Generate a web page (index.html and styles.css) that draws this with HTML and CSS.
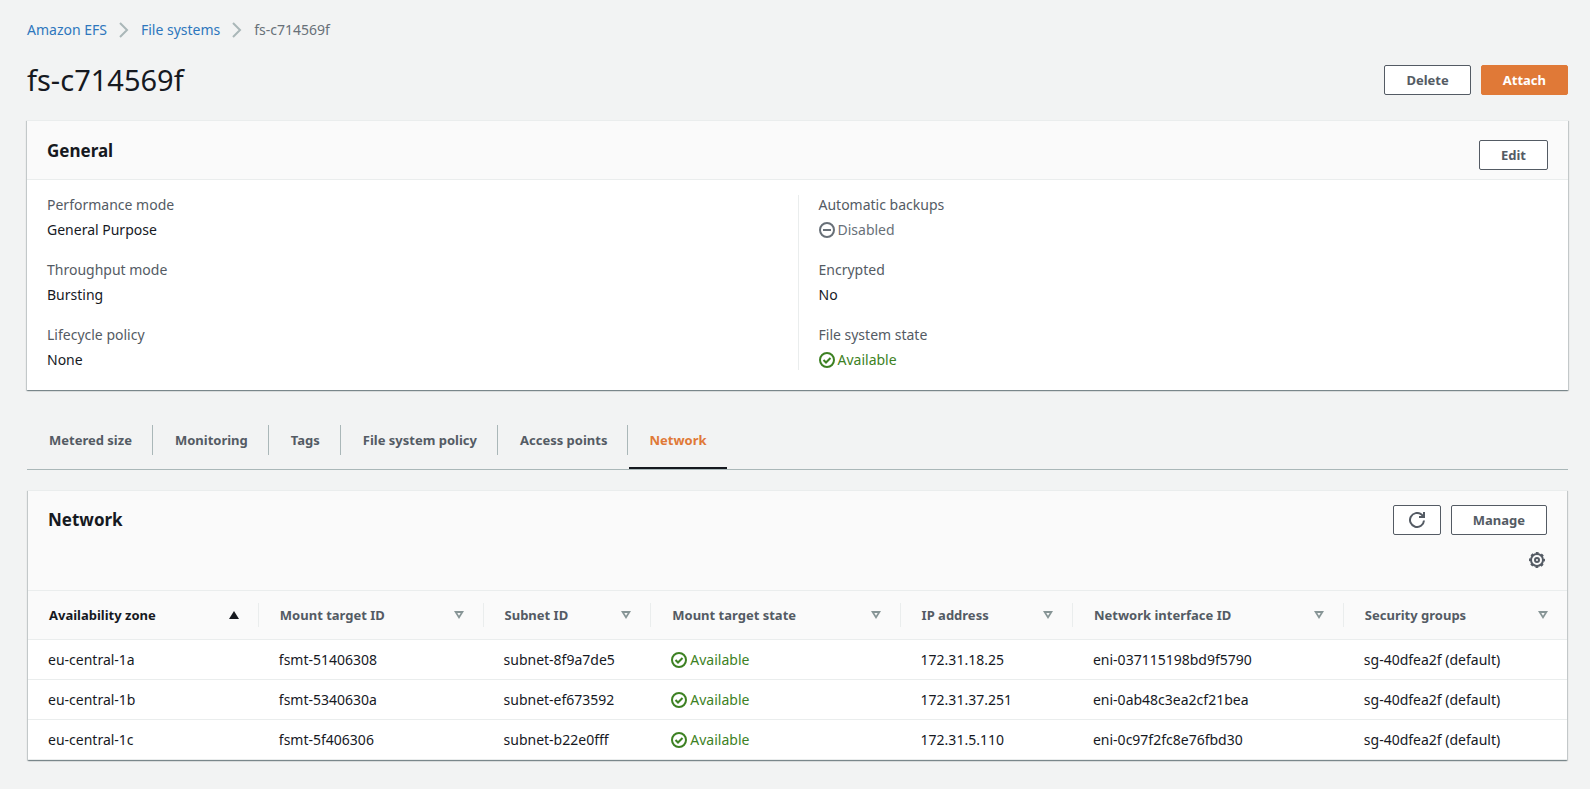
FILE: index.html
```html
<!DOCTYPE html>
<html lang="en">
<head>
    <meta charset="UTF-8">
    <meta name="viewport" content="width=device-width, initial-scale=1.0">
    <title>Amazon EFS - fs-c714569f</title>
    <link rel="stylesheet" href="styles.css">
</head>
<body>
<!-- Shared icons -->
<svg class="sprite" aria-hidden="true">
    <symbol id="icon-chevron" viewBox="0 0 10 16"><path d="M1 1l7 7-7 7"/></symbol>
    <symbol id="icon-check" viewBox="0 0 16 16"><circle cx="8" cy="8" r="7"/><path d="M4.5 8l2.5 2.5 4.5-4.5"/></symbol>
    <symbol id="icon-minus" viewBox="0 0 16 16"><circle cx="8" cy="8" r="7"/><path d="M4 8h8"/></symbol>
    <symbol id="icon-sort" viewBox="0 0 10 8"><path fill="currentColor" fill-rule="evenodd" stroke="none" d="M0 0h10L5 8zM3.300 2L5 4.800 6.700 2z"/></symbol>
    <symbol id="icon-sort-up" viewBox="0 0 10 8"><path fill="currentColor" stroke="none" d="M5 0l5 8H0z"/></symbol>
</svg>

<main class="page">
    <nav class="breadcrumb" aria-label="Breadcrumb">
        <a href="#">Amazon EFS</a>
        <svg class="chevron"><use href="#icon-chevron"/></svg>
        <a href="#">File systems</a>
        <svg class="chevron"><use href="#icon-chevron"/></svg>
        <span>fs-c714569f</span>
    </nav>

    <div class="title-bar">
        <h1>fs-c714569f</h1>
        <div class="actions">
            <button class="btn">Delete</button>
            <button class="btn btn-primary">Attach</button>
        </div>
    </div>

    <section class="panel">
        <div class="panel-header">
            <h2>General</h2>
            <button class="btn">Edit</button>
        </div>
        <div class="details">
            <dl>
                <dt>Performance mode</dt>
                <dd>General Purpose</dd>
                <dt>Throughput mode</dt>
                <dd>Bursting</dd>
                <dt>Lifecycle policy</dt>
                <dd>None</dd>
            </dl>
            <dl>
                <dt>Automatic backups</dt>
                <dd><span class="status disabled"><svg><use href="#icon-minus"/></svg>Disabled</span></dd>
                <dt>Encrypted</dt>
                <dd>No</dd>
                <dt>File system state</dt>
                <dd><span class="status available"><svg><use href="#icon-check"/></svg>Available</span></dd>
            </dl>
        </div>
    </section>

    <div class="tabs" role="tablist">
        <button class="tab" role="tab"><span>Metered size</span></button>
        <button class="tab" role="tab"><span>Monitoring</span></button>
        <button class="tab" role="tab"><span>Tags</span></button>
        <button class="tab" role="tab"><span>File system policy</span></button>
        <button class="tab" role="tab"><span>Access points</span></button>
        <button class="tab active" role="tab" aria-selected="true"><span>Network</span></button>
    </div>

    <section class="panel network">
        <div class="network-header">
            <div class="network-title">
                <h2>Network</h2>
                <div class="actions">
                    <button class="btn btn-icon" aria-label="Refresh">
                        <svg viewBox="0 0 16 16"><path d="M15 8.500A7 7 0 1 1 12.500 2.600L15 5"/><path d="M15 0v5H10"/></svg>
                    </button>
                    <button class="btn">Manage</button>
                </div>
            </div>
            <button class="settings" aria-label="Preferences">
                <svg viewBox="0 0 16 16"><circle cx="8" cy="8" r="6"/><circle cx="8" cy="8" r="7" stroke-dasharray="2.750" stroke-dashoffset="1.370"/><circle cx="8" cy="8" r="2"/></svg>
            </button>
        </div>

        <table>
            <colgroup>
                <col class="col-zone"><col class="col-target"><col class="col-subnet"><col class="col-state">
                <col class="col-ip"><col class="col-eni"><col class="col-sg">
            </colgroup>
            <thead>
                <tr>
                    <th class="sorted"><div>Availability zone<svg><use href="#icon-sort-up"/></svg></div></th>
                    <th><div>Mount target ID<svg><use href="#icon-sort"/></svg></div></th>
                    <th><div>Subnet ID<svg><use href="#icon-sort"/></svg></div></th>
                    <th><div>Mount target state<svg><use href="#icon-sort"/></svg></div></th>
                    <th><div>IP address<svg><use href="#icon-sort"/></svg></div></th>
                    <th><div>Network interface ID<svg><use href="#icon-sort"/></svg></div></th>
                    <th><div>Security groups<svg><use href="#icon-sort"/></svg></div></th>
                </tr>
            </thead>
            <tbody>
                <tr>
                    <td>eu-central-1a</td>
                    <td>fsmt-51406308</td>
                    <td>subnet-8f9a7de5</td>
                    <td><span class="status available"><svg><use href="#icon-check"/></svg>Available</span></td>
                    <td>172.31.18.25</td>
                    <td>eni-037115198bd9f5790</td>
                    <td>sg-40dfea2f (default)</td>
                </tr>
                <tr>
                    <td>eu-central-1b</td>
                    <td>fsmt-5340630a</td>
                    <td>subnet-ef673592</td>
                    <td><span class="status available"><svg><use href="#icon-check"/></svg>Available</span></td>
                    <td>172.31.37.251</td>
                    <td>eni-0ab48c3ea2cf21bea</td>
                    <td>sg-40dfea2f (default)</td>
                </tr>
                <tr>
                    <td>eu-central-1c</td>
                    <td>fsmt-5f406306</td>
                    <td>subnet-b22e0fff</td>
                    <td><span class="status available"><svg><use href="#icon-check"/></svg>Available</span></td>
                    <td>172.31.5.110</td>
                    <td>eni-0c97f2fc8e76fbd30</td>
                    <td>sg-40dfea2f (default)</td>
                </tr>
            </tbody>
        </table>
    </section>
</main>
</body>
</html>
```
FILE: styles.css
```css
* { box-sizing: border-box; }
body { margin: 0; background: #f2f3f3; color: #16191f; font-family: "Noto Sans", sans-serif; font-size: 14px; line-height: 20px; }
h1, h2, dl, dd { margin: 0; }
h1 { font-size: 29px; line-height: 36px; font-weight: 400; }
h2 { font-size: 17px; line-height: 22px; font-weight: 700; }
svg { flex: none; fill: none; stroke: currentColor; stroke-width: 2; }
button { font: inherit; color: inherit; cursor: pointer; }
.sprite { display: none; }
.page { padding: 20px 22px 28px 27px; }

/* Breadcrumb and title */
.breadcrumb { display: flex; align-items: center; gap: 12px; color: #687078; }
.breadcrumb a { color: #2e77bd; text-decoration: none; }
.breadcrumb a:hover { text-decoration: underline; }
.chevron { width: 10px; height: 16px; color: #aab7b8; }
.title-bar { display: flex; align-items: center; justify-content: space-between; margin-top: 22px; }
.actions { display: flex; gap: 10px; }

.btn {
    display: flex;
    align-items: center;
    justify-content: center;
    height: 30px;
    padding: 0 21px;
    background: #fff;
    border: 1px solid #545b64;
    border-radius: 2px;
    color: #545b64;
    font-size: 13px;
    font-weight: 700;
}
.btn:hover { background: #fafafa; }
.btn-primary, .btn-primary:hover { background: #e07937; border-color: #e07937; color: #fff; }
.btn-icon { padding: 0 15px; }
.btn-icon svg { width: 16px; height: 16px; }

/* Panels */
.panel {
    margin-top: 22px;
    background: #fff;
    border-top: 1px solid #eaeded;
    box-shadow: 0 1px 1px 0 rgba(0, 28, 36, 0.3), 1px 1px 1px 0 rgba(0, 28, 36, 0.15), -1px 1px 1px 0 rgba(0, 28, 36, 0.15);
}
.panel-header {
    display: flex;
    justify-content: space-between;
    align-items: flex-start;
    padding: 19px 20px 9px;
    background: #fafafa;
    border-bottom: 1px solid #eaeded;
}
.details { display: grid; grid-template-columns: 1fr 1fr; padding: 15px 0 20px; }
.details dl { padding: 0 20px; }
.details dl + dl { border-left: 1px solid #eaeded; }
.details dt { color: #545b64; }
.details dd { padding: 5px 0 20px; }
.details dd:last-child { padding-bottom: 0; }

.status { display: flex; align-items: center; gap: 3px; }
.status svg { width: 16px; height: 16px; }
.available { color: #3d8123; }
.disabled { color: #687078; }

/* Tabs */
.tabs { display: flex; margin-top: 35px; border-bottom: 1px solid #aab7b8; }
.tab { margin-left: 1px; padding: 0 0 12px; background: none; border: none; border-bottom: 2px solid transparent; color: #545b64; font-size: 13px; font-weight: 700; }
.tab span { display: block; padding: 5px 20px 5px 21px; border-right: 1px solid #aab7b8; }
.tab.active { border-bottom-color: #16191f; color: #e07937; }
.tab.active span { padding: 5px 20px; border-right: none; }

/* Network table */
.network { margin: 20px 1px 0; }
.network-header { padding: 14px 20px 20px; background: #fafafa; }
.network-title { display: flex; align-items: center; justify-content: space-between; }
.settings { display: block; width: 20px; height: 20px; margin: 15px 0 0 auto; padding: 2px; background: none; border: none; color: #545b64; }
.settings svg { display: block; width: 16px; height: 16px; }
table { width: 100%; table-layout: fixed; border-collapse: collapse; }
.col-zone { width: 15%; }
.col-target { width: 14.6%; }
.col-subnet { width: 10.9%; }
.col-state { width: 16.2%; }
.col-ip { width: 11.2%; }
.col-eni { width: 17.6%; }
.col-sg { width: 14.5%; }
th { padding: 12px 0; background: #fafafa; border-top: 1px solid #eaeded; border-bottom: 1px solid #eaeded; color: #545b64; font-size: 13px; text-align: left; }
th div { display: flex; align-items: center; justify-content: space-between; height: 24px; padding: 0 19px 0 21px; border-right: 1px solid #eaeded; }
th:last-child div { border-right: none; }
th svg { width: 10px; height: 8px; color: #879596; }
.sorted, .sorted svg { color: #16191f; }
td { height: 40px; padding: 0 20px; border-bottom: 1px solid #eaeded; }
```
